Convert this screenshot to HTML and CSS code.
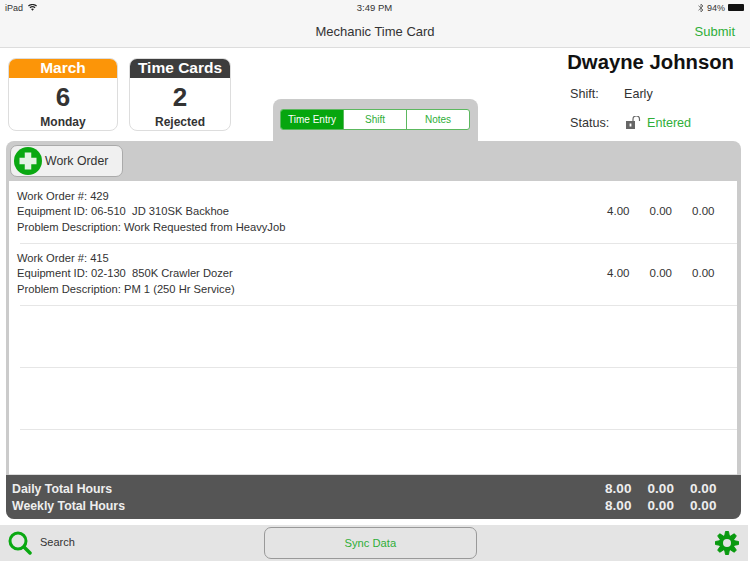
FILE: index.html
```html
<!DOCTYPE html>
<html>
    <head>
        <meta charset="utf-8">
        <title>Mechanic Time Card</title>
        <link rel="stylesheet" href="styles.css">
    </head>
    <body>
        <header class="topBar">
            <div class="statusBar">
                <div class="statusLeft">
                    <span>iPad</span>
                    <svg class="wifi" width="9" height="7" viewBox="0 0 11 8"><path d="M5.5 8 3.7 5.900a2.700 2.700 0 0 1 3.600 0zM2.800 4.900 1.900 3.800a5.500 5.500 0 0 1 7.200 0L8.200 4.900a4.100 4.100 0 0 0-5.400 0zM1 2.800 0 1.700a8.300 8.300 0 0 1 11 0L10 2.800a6.900 6.900 0 0 0-9 0z" fill="#222"/></svg>
                </div>
                <span class="clock">3:49 PM</span>
                <div class="statusRight">
                    <svg width="6" height="10" viewBox="0 0 6 10"><path d="M0.500 2.700 5 7 3 9V1l2 2L0.500 7.300" fill="none" stroke="#666" stroke-width="0.9"/></svg>
                    <span>94%</span>
                    <span class="battery"></span>
                </div>
            </div>
            <nav class="navBar">
                <span class="navTitle">Mechanic Time Card</span>
                <span class="submit">Submit</span>
            </nav>
        </header>

        <div class="summary">
            <div class="card">
                <div class="cardHead orange">March</div>
                <div class="cardNum">6</div>
                <div class="cardLabel">Monday</div>
            </div>
            <div class="card cardNarrow">
                <div class="cardHead dark">Time Cards</div>
                <div class="cardNum">2</div>
                <div class="cardLabel">Rejected</div>
            </div>
            <div class="tabTab">
                <div class="segments">
                    <span class="segment active">Time Entry</span>
                    <span class="segment">Shift</span>
                    <span class="segment">Notes</span>
                </div>
            </div>
            <div class="info">
                <div class="name">Dwayne Johnson</div>
                <div class="infoRow">
                    <span class="infoLabel">Shift:</span>
                    <span>Early</span>
                </div>
                <div class="infoRow">
                    <span class="infoLabel">Status:</span>
                    <svg class="lock" width="15" height="13" viewBox="0 0 15 13"><rect x="0" y="5" width="9" height="8" fill="#666"/><rect x="3.600" y="7.500" width="1.800" height="3" fill="#fff"/><path d="M7 5V3.200a3 3 0 0 1 6.500 0V5" fill="none" stroke="#666" stroke-width="1.200"/></svg>
                    <span class="entered">Entered</span>
                </div>
            </div>
        </div>

        <main class="panel">
            <div class="panelTools">
                <button class="addBtn">
                    <svg width="28" height="28" viewBox="0 0 28 28"><circle cx="14" cy="14" r="14" fill="#0aa812"/><path d="M14 5.500v17M5.500 14h17" stroke="#e4f2e4" stroke-width="6.500"/></svg>
                    Work Order
                </button>
            </div>
            <div class="list">
                <div class="row">
                    <div class="rowText">
                        <p>Work Order #: 429</p>
                        <p>Equipment ID: 06-510&nbsp; JD 310SK Backhoe</p>
                        <p>Problem Description: Work Requested from HeavyJob</p>
                    </div>
                    <span class="val">4.00</span><span class="val">0.00</span><span class="val">0.00</span>
                </div>
                <div class="row">
                    <div class="rowText">
                        <p>Work Order #: 415</p>
                        <p>Equipment ID: 02-130&nbsp; 850K Crawler Dozer</p>
                        <p>Problem Description: PM 1 (250 Hr Service)</p>
                    </div>
                    <span class="val">4.00</span><span class="val">0.00</span><span class="val">0.00</span>
                </div>
                <div class="row"></div>
                <div class="row"></div>
            </div>
            <div class="totals">
                <div class="totalRow">
                    <span class="totalName">Daily Total Hours</span>
                    <span class="totalVal">8.00</span><span class="totalVal">0.00</span><span class="totalVal">0.00</span>
                </div>
                <div class="totalRow">
                    <span class="totalName">Weekly Total Hours</span>
                    <span class="totalVal">8.00</span><span class="totalVal">0.00</span><span class="totalVal">0.00</span>
                </div>
            </div>
        </main>

        <footer class="footer">
            <svg width="24" height="24" viewBox="0 0 24 24"><circle cx="10" cy="10" r="8" fill="none" stroke="#0aa812" stroke-width="3"/><path d="M16 16l6 6" stroke="#0aa812" stroke-width="3.500" stroke-linecap="round"/></svg>
            <span class="searchTxt">Search</span>
            <button class="syncBtn">Sync Data</button>
            <svg class="gear" width="26" height="26" viewBox="0 0 26 26">
                <g fill="#0a9a10" stroke="#0a9a10" stroke-linejoin="round">
                    <path d="M10.500 7 11.500 1.500h3l1 5.500z"/>
                    <path d="M10.500 7 11.500 1.500h3l1 5.500z" transform="rotate(45 13 13)"/>
                    <path d="M10.500 7 11.500 1.500h3l1 5.500z" transform="rotate(90 13 13)"/>
                    <path d="M10.500 7 11.500 1.500h3l1 5.500z" transform="rotate(135 13 13)"/>
                    <path d="M10.500 7 11.500 1.500h3l1 5.500z" transform="rotate(180 13 13)"/>
                    <path d="M10.500 7 11.500 1.500h3l1 5.500z" transform="rotate(225 13 13)"/>
                    <path d="M10.500 7 11.500 1.500h3l1 5.500z" transform="rotate(270 13 13)"/>
                    <path d="M10.500 7 11.500 1.500h3l1 5.500z" transform="rotate(315 13 13)"/>
                    <circle cx="13" cy="13" r="7.500"/>
                </g>
                <circle cx="13" cy="13" r="4" fill="#e4e4e4"/>
            </svg>
        </footer>
    </body>
</html>
```

FILE: styles.css
```css
* {
    margin: 0;
    padding: 0;
    box-sizing: border-box;
}

body {
    width: 750px;
    height: 562px;
    overflow: hidden;
    background-color: white;
    font-family: 'Liberation Sans', Arial, sans-serif;
    color: #333;
}

.topBar {
    height: 48px;
    background-color: #f6f6f6;
    border-bottom: 1px solid #ddd;
}
.statusBar {
    height: 15px;
    padding: 0 6px 0 5px;
    display: flex;
    justify-content: space-between;
    align-items: center;
    font-size: 9px;
    color: #333;
}
.statusLeft {
    width: 100px;
    display: flex;
    align-items: center;
    gap: 5px;
}
.statusRight {
    width: 100px;
    display: flex;
    justify-content: flex-end;
    align-items: center;
    gap: 3px;
}
.clock {
    font-size: 9.5px;
}
.battery {
    width: 16px;
    height: 7px;
    background-color: #111;
    border-radius: 1px;
    display: block;
}
.navBar {
    height: 32px;
    display: flex;
    justify-content: center;
    align-items: center;
    position: relative;
}
.navTitle {
    font-size: 13px;
    color: #333;
}
.submit {
    position: absolute;
    right: 15px;
    top: 9px;
    font-size: 13px;
    color: #2fae38;
}

.summary {
    height: 93px;
    padding: 10px 16px 0 8px;
    display: flex;
    align-items: flex-start;
}
.card {
    flex-shrink: 0;
    width: 110px;
    height: 73px;
    margin-right: 11px;
    border: 1px solid #ddd;
    border-radius: 8px;
    text-align: center;
    overflow: hidden;
}
.cardNarrow {
    width: 102px;
}
.cardHead {
    height: 20px;
    line-height: 20px;
    font-size: 15.5px;
    font-weight: bold;
    color: white;
    margin: -1px -1px 0;
}
.orange {
    background-color: #fc9508;
}
.dark {
    background-color: #3d3d3d;
}
.cardNum {
    height: 34px;
    line-height: 38px;
    font-size: 26px;
    font-weight: bold;
}
.cardLabel {
    font-size: 12px;
    font-weight: bold;
    line-height: 20px;
}

.tabTab {
    flex-shrink: 0;
    width: 205px;
    height: 42px;
    margin: 41px 0 0 31px;
    padding: 10px 7px 0;
    background-color: #cbcbcb;
    border-radius: 8px 8px 0 0;
}
.segments {
    width: 190px;
    height: 21px;
    display: flex;
    background-color: white;
    border: 1px solid #5cb85f;
    border-radius: 3px;
    overflow: hidden;
}
.segment {
    flex: 1;
    text-align: center;
    font-size: 10px;
    line-height: 19px;
    color: #2fae38;
    border-left: 1px solid #5cb85f;
}
.segment.active {
    background-color: #06a60e;
    color: white;
    border-left: none;
}

.info {
    flex: 1;
    min-width: 0;
    margin-top: -8px;
    padding-left: 92px;
}
.name {
    margin-left: -10px;
    font-size: 20.3px;
    font-weight: bold;
    color: #111;
    line-height: 24px;
    white-space: nowrap;
    text-align: right;
    margin-bottom: 5px;
}
.infoRow {
    height: 29px;
    display: flex;
    align-items: center;
    font-size: 12.6px;
    white-space: nowrap;
}
.infoLabel {
    width: 54px;
}
.lock {
    margin: 0 6px 0 2px;
}
.entered {
    color: #2fae38;
}

.panel {
    width: 735px;
    height: 378px;
    margin-left: 6px;
    background-color: #cbcbcb;
    border-radius: 8px;
    overflow: hidden;
    padding: 0 4px 0 3px;
}
.panelTools {
    height: 40px;
    padding: 4px 1px;
}
.addBtn {
    width: 113px;
    height: 32px;
    padding-left: 3px;
    display: flex;
    align-items: center;
    gap: 3px;
    background-color: #f0f0f0;
    border: 1px solid #aaa;
    border-radius: 7px;
    font-family: inherit;
    font-size: 12.3px;
    color: #333;
}
.list {
    height: 294px;
    padding-top: 1px;
    background-color: white;
    border-bottom: 1px solid #ddd;
}
.row {
    height: 62px;
    margin-left: 11px;
    display: flex;
    align-items: center;
    border-bottom: 1px solid #e6e6e6;
    font-size: 11.2px;
}
.rowText {
    width: 580px;
    margin-left: -3px;
    line-height: 15.5px;
    margin-top: -1px;
}
.val {
    width: 42.5px;
    text-align: center;
    font-size: 11.5px;
    margin-top: -4px;
}
.totals {
    height: 44px;
    margin: 0 -4px 0 -3px;
    padding: 6px 0 0 6px;
    background-color: #555;
    color: #eee;
    font-size: 12.3px;
    font-weight: bold;
}
.totalRow {
    height: 16.5px;
    line-height: 16.5px;
    display: flex;
}
.totalName {
    width: 585px;
}
.totalVal {
    width: 42.5px;
    text-align: center;
    font-size: 13.5px;
}

.footer {
    width: 748px;
    height: 36px;
    margin-top: 6px;
    padding-left: 8px;
    background-color: #e4e4e4;
    display: flex;
    align-items: center;
}
.searchTxt {
    margin: -2px 0 0 8px;
    font-size: 11px;
}
.syncBtn {
    width: 213px;
    height: 32px;
    margin-left: 189px;
    background-color: #e4e4e4;
    border: 1px solid #999;
    border-radius: 7px;
    color: #2fae38;
    font-family: inherit;
    font-size: 11.2px;
}
.gear {
    margin-left: 237px;
}
```
